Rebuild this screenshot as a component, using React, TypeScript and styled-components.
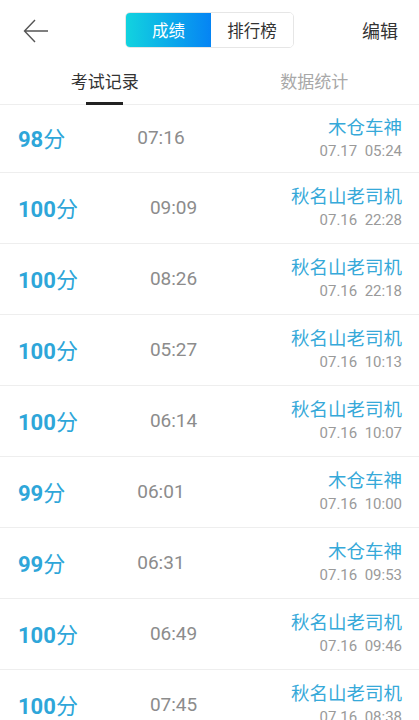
import styled, { createGlobalStyle } from 'styled-components';

const GlobalStyle = createGlobalStyle`
  body {
    margin: 0;
    background: #fff;
    font-family: Roboto, "Noto Sans CJK SC", sans-serif;
  }
`;

const Page = styled.div`
  width: 419px;
  height: 720px;
  overflow: hidden;
  background: #fff;
`;

const TopBar = styled.div`
  height: 60px;
  display: grid;
  grid-template-columns: 1fr auto 1fr;
  align-items: center;
  padding: 0 21px 0 23px;
`;

const Back = styled.button`
  justify-self: start;
  border: none;
  background: none;
  padding: 0;
  display: flex;
  margin-top: 1px;
`;

const Segment = styled.div`
  display: flex;
  border: 1px solid #e6e6e6;
  border-radius: 5px;
  overflow: hidden;
  height: 34px;
  margin-left: -2px;
  margin-top: -1px;
`;

const SegBtn = styled.div<{ active?: boolean }>`
  width: ${(p) => (p.active ? '85px' : '82px')};
  display: flex;
  align-items: center;
  justify-content: center;
  font-size: 16.5px;
  color: ${(p) => (p.active ? '#fff' : '#333')};
  background: ${(p) => (p.active ? 'linear-gradient(90deg, #12d3df, #0584f4)' : '#fff')};
`;

const Edit = styled.div`
  justify-self: end;
  font-size: 18px;
  color: #333;
`;

const Tabs = styled.div`
  display: flex;
  height: 44px;
  border-bottom: 1px solid #eee;
`;

const Tab = styled.div<{ active?: boolean }>`
  flex: 1;
  display: flex;
  flex-direction: column;
  align-items: center;
  justify-content: center;
  position: relative;
  font-size: 17px;
  color: ${(p) => (p.active ? '#333' : '#a8a8a8')};
  padding-bottom: 4px;
`;

const TabLine = styled.div`
  position: absolute;
  bottom: -1px;
  width: 37px;
  height: 3px;
  background: #222;
`;

const Row = styled.div`
  height: 70px;
  display: flex;
  align-items: center;
  padding: 0 18px;
  border-bottom: 1px solid #eee;
  &:first-child {
    height: 67px;
  }
`;

const Score = styled.div`
  color: #2ea6d9;
  font-size: 22px;
  margin-bottom: 3px;
  b {
    font-size: 22px;
    font-weight: 700;
  }
`;

const Time = styled.div`
  margin-left: 72px;
  font-size: 19px;
  color: #8c8c8c;
  flex: 1;
  margin-bottom: 2px;
`;

const Right = styled.div`
  display: flex;
  flex-direction: column;
  align-items: flex-end;
  margin-right: -1px;
`;

const Name = styled.div`
  font-size: 18.5px;
  color: #36a9d9;
  line-height: 24px;
`;

const When = styled.div`
  font-size: 15px;
  color: #9a9a9a;
  line-height: 22px;
  white-space: pre;
`;

const records = [
  { score: '98', time: '07:16', name: '木仓车神', date: '07.17  05:24' },
  { score: '100', time: '09:09', name: '秋名山老司机', date: '07.16  22:28' },
  { score: '100', time: '08:26', name: '秋名山老司机', date: '07.16  22:18' },
  { score: '100', time: '05:27', name: '秋名山老司机', date: '07.16  10:13' },
  { score: '100', time: '06:14', name: '秋名山老司机', date: '07.16  10:07' },
  { score: '99', time: '06:01', name: '木仓车神', date: '07.16  10:00' },
  { score: '99', time: '06:31', name: '木仓车神', date: '07.16  09:53' },
  { score: '100', time: '06:49', name: '秋名山老司机', date: '07.16  09:46' },
  { score: '100', time: '07:45', name: '秋名山老司机', date: '07.16  08:38' },
];

export default function App() {
  return (
    <Page>
      <GlobalStyle />
      <TopBar>
        <Back>
          <svg width="26" height="26" viewBox="0 0 26 26" fill="none" stroke="#555" strokeWidth="1.4">
            <path d="M25 13H2M12 2L1.5 13 12 24" />
          </svg>
        </Back>
        <Segment>
          <SegBtn active>成绩</SegBtn>
          <SegBtn>排行榜</SegBtn>
        </Segment>
        <Edit>编辑</Edit>
      </TopBar>
      <Tabs>
        <Tab active>
          考试记录
          <TabLine />
        </Tab>
        <Tab>数据统计</Tab>
      </Tabs>
      <div>
        {records.map((r, i) => (
          <Row key={i}>
            <Score>
              <b>{r.score}</b>分
            </Score>
            <Time>{r.time}</Time>
            <Right>
              <Name>{r.name}</Name>
              <When>{r.date}</When>
            </Right>
          </Row>
        ))}
      </div>
    </Page>
  );
}
